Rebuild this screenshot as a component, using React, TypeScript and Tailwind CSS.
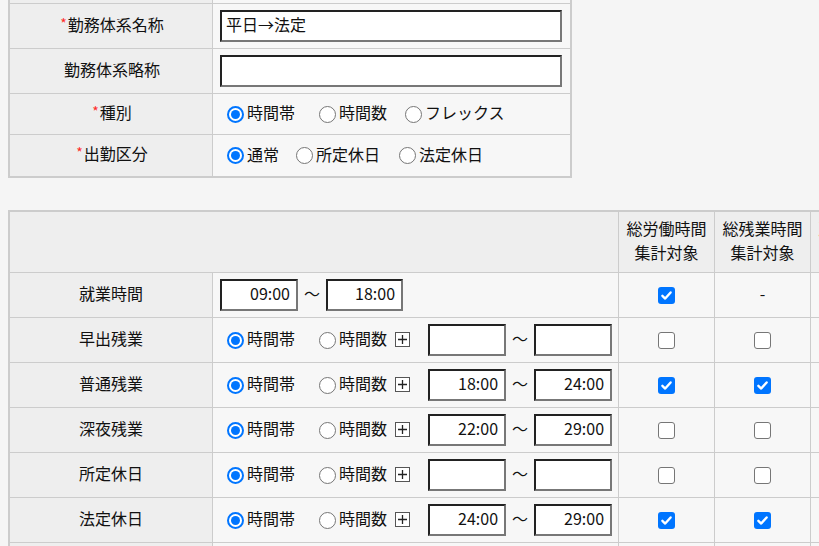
import React from "react";

const Req = () => <span className="text-[#ff2a2a] text-[14px] mr-[1px] relative top-[-2px]">*</span>;

const T = ({ children, className = "" }: { children: React.ReactNode; className?: string }) => (
  <span className={"relative top-[-2px] " + className}>{children}</span>
);

const Radio = ({ checked }: { checked?: boolean }) =>
  checked ? (
    <span className="w-[17px] h-[17px] shrink-0 rounded-full border-2 border-[#0075ff] bg-white flex items-center justify-center">
      <span className="w-[9px] h-[9px] rounded-full bg-[#0075ff]" />
    </span>
  ) : (
    <span className="w-[17px] h-[17px] shrink-0 rounded-full border-[1.5px] border-[#767676] bg-white" />
  );

const Check = ({ checked }: { checked?: boolean }) =>
  checked ? (
    <span className="w-[17px] h-[17px] rounded-[3px] bg-[#0075ff] flex items-center justify-center">
      <svg width="13" height="13" viewBox="0 0 12 12">
        <path d="M2.2 6.3 4.8 8.8 9.8 3.2" fill="none" stroke="#fff" strokeWidth="2.2" strokeLinecap="round" strokeLinejoin="round" />
      </svg>
    </span>
  ) : (
    <span className="w-[17px] h-[17px] rounded-[3px] border-[1.5px] border-[#767676] bg-white" />
  );

const TextBox = ({ value, className }: { value: string; className: string }) => (
  <input
    readOnly
    value={value}
    className={
      "h-8 pb-[4px] border-2 border-solid border-t-[#222] border-l-[#222] border-r-[#777] border-b-[#777] bg-white text-[16px] text-[#111] outline-none " +
      className
    }
  />
);

const PlusBox = () => (
  <svg width="15" height="15" viewBox="0 0 15 15" className="shrink-0 relative top-[-1px]">
    <rect x="0.5" y="0.5" width="14" height="14" fill="#fff" stroke="#555" />
    <path d="M7.5 3v9M3 7.5h9" stroke="#222" strokeWidth="1.3" />
  </svg>
);

type Row = { label: string; kind: "fixed" | "opt" | "empty"; from: string; to: string; c1: boolean; c2: boolean | null };

const rows: Row[] = [
  { label: "就業時間", kind: "fixed", from: "09:00", to: "18:00", c1: true, c2: null },
  { label: "早出残業", kind: "opt", from: "", to: "", c1: false, c2: false },
  { label: "普通残業", kind: "opt", from: "18:00", to: "24:00", c1: true, c2: true },
  { label: "深夜残業", kind: "opt", from: "22:00", to: "29:00", c1: false, c2: false },
  { label: "所定休日", kind: "opt", from: "", to: "", c1: false, c2: false },
  { label: "法定休日", kind: "opt", from: "24:00", to: "29:00", c1: true, c2: true },
  { label: "", kind: "empty", from: "", to: "", c1: false, c2: false },
];

export default function App() {
  return (
    <div className="h-[546px] w-[819px] overflow-hidden bg-[#f5f5f5] pl-2 text-[16px] leading-6 text-[#111] font-['Noto_Sans_CJK_JP','Liberation_Sans',sans-serif]">
      {/* top table */}
      <div className="w-[564px] border-2 border-t-0 border-[#ccc]">
        <div className="flex h-[4px] border-b border-[#ccc]">
          <div className="w-[203px] bg-[#eee] border-r border-[#ccc]" />
          <div className="flex-1 bg-[#f7f7f7]" />
        </div>
        <div className="flex h-[45px] border-b border-[#ccc]">
          <div className="w-[203px] bg-[#eee] border-r border-[#ccc] flex items-center justify-center pl-[2px]">
            <T>
              <Req />
              勤務体系名称
            </T>
          </div>
          <div className="flex-1 bg-[#f7f7f7] flex items-center pl-[7px] pr-[8px]">
            <TextBox value="平日→法定" className="w-full px-1" />
          </div>
        </div>
        <div className="flex h-[45px] border-b border-[#ccc]">
          <div className="w-[203px] bg-[#eee] border-r border-[#ccc] flex items-center justify-center pl-[2px]">
            <T>勤務体系略称</T>
          </div>
          <div className="flex-1 bg-[#f7f7f7] flex items-center pl-[7px] pr-[8px]">
            <TextBox value="" className="w-full px-1" />
          </div>
        </div>
        <div className="flex h-[41px] border-b border-[#ccc]">
          <div className="w-[203px] bg-[#eee] border-r border-[#ccc] flex items-center justify-center pl-[2px]">
            <T>
              <Req />
              種別
            </T>
          </div>
          <div className="flex-1 bg-[#f7f7f7] flex items-center pl-[14px]">
            <Radio checked />
            <T className="ml-[3px] mr-[24px]">時間帯</T>
            <Radio />
            <T className="ml-[3px] mr-[18px]">時間数</T>
            <Radio />
            <T className="ml-[3px]">フレックス</T>
          </div>
        </div>
        <div className="flex h-[41px]">
          <div className="w-[203px] bg-[#eee] border-r border-[#ccc] flex items-center justify-center pl-[2px]">
            <T>
              <Req />
              出勤区分
            </T>
          </div>
          <div className="flex-1 bg-[#f7f7f7] flex items-center pl-[14px]">
            <Radio checked />
            <T className="ml-[3px] mr-[17px]">通常</T>
            <Radio />
            <T className="ml-[3px] mr-[19px]">所定休日</T>
            <Radio />
            <T className="ml-[3px]">法定休日</T>
          </div>
        </div>
      </div>

      {/* second table */}
      <div className="mt-8 w-[1000px] border-2 border-[#ccc]">
        <div className="flex h-[61px] border-b border-[#ccc] bg-[#eee]">
          <div className="w-[609px] shrink-0 border-r border-[#ccc]" />
          <div className="w-[96px] shrink-0 border-r border-[#ccc] flex flex-col items-center justify-center">
            <T>総労働時間</T>
            <T>集計対象</T>
          </div>
          <div className="w-[96px] shrink-0 border-r border-[#ccc] flex flex-col items-center justify-center">
            <T>総残業時間</T>
            <T>集計対象</T>
          </div>
          <div className="w-[96px] shrink-0 border-r border-[#ccc] flex flex-col items-center justify-center">
            <T>所定労働時</T>
            <T>集計対象</T>
          </div>
        </div>
        {rows.map((r, i) => (
          <div key={i} className="flex h-[45px] border-b border-[#ccc]">
            <div className="w-[203px] shrink-0 bg-[#eee] border-r border-[#ccc] flex items-center justify-center">
              {r.label && <T>{r.label}</T>}
            </div>
            <div className="w-[406px] shrink-0 bg-[#f7f7f7] border-r border-[#ccc] flex items-center pl-[7px]">
              {r.kind === "fixed" && (
                <>
                  <TextBox value={r.from} className="w-[78px] text-right pr-[6px]" />
                  <T className="mx-[6px]">～</T>
                  <TextBox value={r.to} className="w-[77px] text-right pr-[6px]" />
                </>
              )}
              {r.kind === "opt" && (
                <>
                  <span className="ml-[7px] flex items-center">
                    <Radio checked />
                  </span>
                  <T className="ml-[3px] mr-[24px]">時間帯</T>
                  <Radio />
                  <T className="ml-[3px] mr-[8px]">時間数</T>
                  <PlusBox />
                  <TextBox value={r.from} className="ml-[18px] w-[78px] text-right pr-[6px]" />
                  <T className="mx-[6px]">～</T>
                  <TextBox value={r.to} className="w-[78px] text-right pr-[6px]" />
                </>
              )}
            </div>
            <div className="w-[96px] shrink-0 bg-[#f7f7f7] border-r border-[#ccc] flex items-center justify-center">
              {r.kind !== "empty" && <Check checked={r.c1} />}
            </div>
            <div className="w-[96px] shrink-0 bg-[#f7f7f7] border-r border-[#ccc] flex items-center justify-center">
              {r.kind !== "empty" && (r.c2 === null ? <T>-</T> : <Check checked={r.c2} />)}
            </div>
            <div className="w-[96px] shrink-0 bg-[#f7f7f7] border-r border-[#ccc]" />
          </div>
        ))}
      </div>
    </div>
  );
}
